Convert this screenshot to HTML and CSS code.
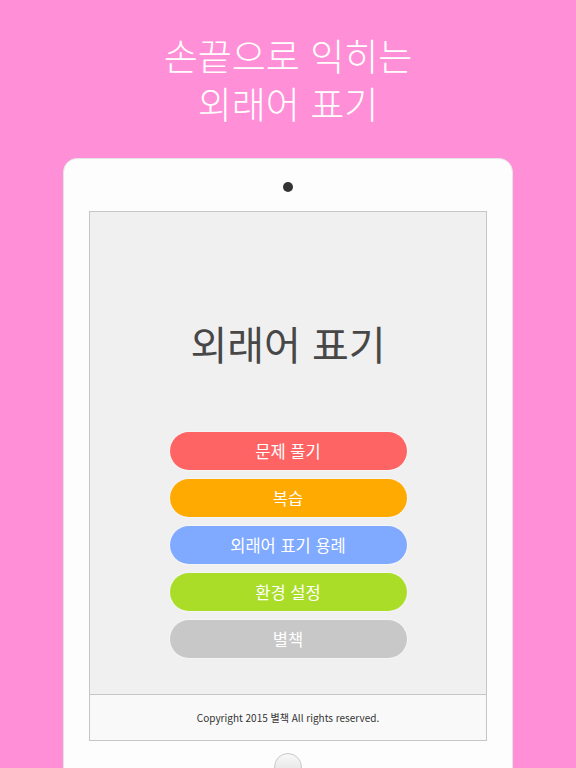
FILE: index.html
```html
<!DOCTYPE html>
<html lang="ko">
<head>
<meta charset="utf-8">
<link rel="stylesheet" href="styles.css">
</head>
<body>
<div class="page">
  <header class="headline">
    <span class="hl">손끝으로 익히는</span>
    <span class="hl">외래어 표기</span>
  </header>
  <div class="tablet">
    <div class="camera"></div>
    <div class="screen">
      <div class="main">
        <h1 class="title">외래어 표기</h1>
        <div class="menu">
          <div class="btn red">문제 풀기</div>
          <div class="btn orange">복습</div>
          <div class="btn blue">외래어 표기 용례</div>
          <div class="btn green">환경 설정</div>
          <div class="btn gray">별책</div>
        </div>
      </div>
      <div class="footer">Copyright 2015 별책 All rights reserved.</div>
    </div>
    <div class="home"></div>
  </div>
</div>
</body>
</html>
```
FILE: styles.css
```css
html, body {
  margin: 0;
  padding: 0;
}
body {
  background: #ff90d8;
  font-family: "Noto Sans CJK KR", "Noto Sans", sans-serif;
  overflow: hidden;
  height: 768px;
}
.page {
  width: 576px;
  height: 768px;
  overflow: hidden;
}
.headline {
  height: 158px;
  box-sizing: border-box;
  padding-top: 31px;
  color: #fff;
  display: flex;
  flex-direction: column;
  align-items: center;
  font-size: 37px;
  font-weight: 300;
}
.hl {
  display: block;
  height: 48px;
  line-height: 48px;
}
.tablet {
  margin-left: 63px;
  width: 450px;
  height: 700px;
  box-sizing: border-box;
  background: #fdfdfd;
  border: 1px solid #e4e4e4;
  border-radius: 14px 14px 0 0;
  display: flex;
  flex-direction: column;
  align-items: center;
}
.camera {
  width: 10px;
  height: 10px;
  border-radius: 50%;
  background: #333;
  margin-top: 23px;
  margin-bottom: 19px;
}
.screen {
  width: 398px;
  box-sizing: border-box;
  border: 1px solid #c6c6c6;
  display: flex;
  flex-direction: column;
}
.main {
  height: 482px;
  background: #f0f0f0;
  border-bottom: 1px solid #c6c6c6;
  display: flex;
  flex-direction: column;
  align-items: center;
}
.title {
  margin: 101px 0 0;
  height: 60px;
  line-height: 60px;
  font-size: 40px;
  font-weight: 400;
  color: #474747;
}
.menu {
  margin-top: 59px;
  display: flex;
  flex-direction: column;
  gap: 9px;
}
.btn {
  width: 237px;
  height: 38px;
  border-radius: 19px;
  color: #fff;
  font-size: 16.5px;
  line-height: 38px;
  text-align: center;
  box-shadow: 0 0 0 1px rgba(255,255,255,0.35);
}
.red { background: #ff6464; }
.orange { background: #ffaa00; }
.blue { background: #80aaff; }
.green { background: #aadd28; }
.gray { background: #c8c8c8; }
.footer {
  height: 45px;
  background: #f9f9f9;
  color: #333;
  font-size: 10px;
  text-align: center;
  line-height: 45px;
}
.home {
  width: 26px;
  height: 26px;
  margin-top: 12px;
  border-radius: 50%;
  border: 1px solid #c8c8c8;
  background: linear-gradient(#f8f8f8, #dcdcdc);
}
```
